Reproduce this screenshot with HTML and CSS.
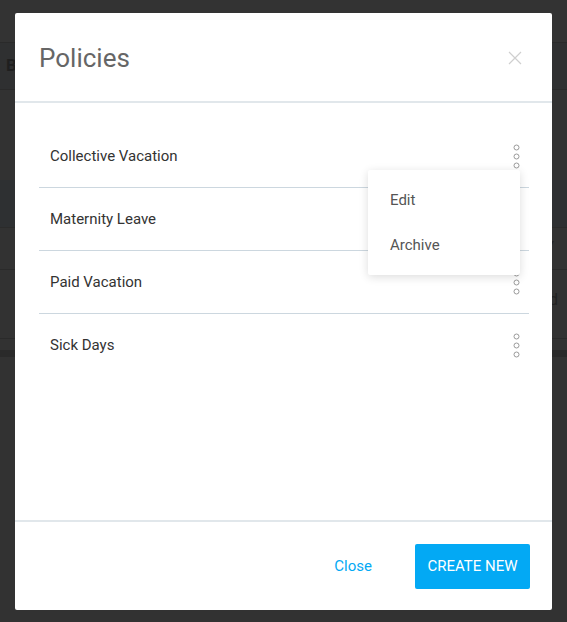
FILE: index.html
```html
<!DOCTYPE html>
<html>
<head>
<meta charset="utf-8">
<link rel="stylesheet" href="styles.css">
</head>
<body>
<div class="page">
  <div class="band band-top"></div>
  <div class="band band-head"><span class="bg-b">B</span></div>
  <div class="band band-gap"></div>
  <div class="band band-th"></div>
  <div class="band band-r1"><span class="bg-right">Y</span></div>
  <div class="band band-r2"><span class="bg-right">id</span></div>
  <div class="band band-r3"></div>
  <div class="band band-dark"></div>
</div>

<div class="modal">
  <div class="modal-header">
    <h1 class="modal-title">Policies</h1>
    <svg class="close-x" width="14" height="14" viewBox="0 0 14 14"><path d="M1 1L13 13M13 1L1 13" stroke="#cfcfcf" stroke-width="1.2" fill="none"/></svg>
  </div>
  <div class="modal-body">
    <ul class="policy-list">
      <li class="policy-row">
        <span class="policy-name">Collective Vacation</span>
        <svg class="kebab" width="7" height="25" viewBox="0 0 7 25"><circle cx="3.5" cy="3.5" r="2.5"/><circle cx="3.5" cy="12.5" r="2.5"/><circle cx="3.5" cy="21.5" r="2.5"/></svg>
        <div class="menu">
          <div class="menu-item">Edit</div>
          <div class="menu-item">Archive</div>
        </div>
      </li>
      <li class="policy-row">
        <span class="policy-name">Maternity Leave</span>
        <svg class="kebab" width="7" height="25" viewBox="0 0 7 25"><circle cx="3.5" cy="3.5" r="2.5"/><circle cx="3.5" cy="12.5" r="2.5"/><circle cx="3.5" cy="21.5" r="2.5"/></svg>
      </li>
      <li class="policy-row">
        <span class="policy-name">Paid Vacation</span>
        <svg class="kebab" width="7" height="25" viewBox="0 0 7 25"><circle cx="3.5" cy="3.5" r="2.5"/><circle cx="3.5" cy="12.5" r="2.5"/><circle cx="3.5" cy="21.5" r="2.5"/></svg>
      </li>
      <li class="policy-row">
        <span class="policy-name">Sick Days</span>
        <svg class="kebab" width="7" height="25" viewBox="0 0 7 25"><circle cx="3.5" cy="3.5" r="2.5"/><circle cx="3.5" cy="12.5" r="2.5"/><circle cx="3.5" cy="21.5" r="2.5"/></svg>
      </li>
    </ul>
  </div>
  <div class="modal-footer">
    <button class="btn-link">Close</button>
    <button class="btn-primary">CREATE NEW</button>
  </div>
</div>
</body>
</html>
```

FILE: styles.css
```css
html, body {
  margin: 0;
  padding: 0;
}
body {
  background: #323232;
  font-family: Roboto, "Liberation Sans", sans-serif;
  width: 567px;
  height: 622px;
  overflow: hidden;
  position: relative;
}
.page {
  display: flex;
  flex-direction: column;
}
.band {
  position: relative;
  box-sizing: border-box;
}
.band-top { height: 43px; background: #333333; border-bottom: 1px solid #2a2a2a; }
.band-head { height: 47px; background: #2f3031; border-bottom: 1px solid #2a2a2a; }
.band-gap { height: 90px; background: #323232; }
.band-th { height: 48px; background: #2e3032; border-bottom: 1px solid #2b2b2b; }
.band-r1 { height: 42px; background: #323232; border-bottom: 1px solid #2a2a2a; }
.band-r2 { height: 69px; background: #323232; border-bottom: 1px solid #2a2a2a; }
.band-r3 { height: 11px; background: #323232; }
.band-dark { height: 7px; background: #2a2a2a; }
.bg-b {
  position: absolute;
  left: 6px;
  top: 12px;
  font-size: 17px;
  font-weight: 700;
  color: #1f1f1f;
}
.bg-right {
  position: absolute;
  left: 545px;
  top: 10px;
  font-size: 15px;
  color: #222;
}
.band-r2 .bg-right { top: 20px; font-size: 16px; }

.modal {
  position: absolute;
  left: 15px;
  top: 13px;
  width: 537px;
  height: 597px;
  background: #fff;
  border-radius: 2px;
  display: flex;
  flex-direction: column;
}
.modal-header {
  height: 88px;
  padding: 0 30px 0 24px;
  display: flex;
  align-items: center;
  justify-content: space-between;
  border-bottom: 2px solid #e1e7eb;
}
.modal-title {
  margin: 0;
  font-size: 26px;
  font-weight: 400;
  color: #666;
  padding-top: 1px;
}
.close-x { display: block; margin-top: 1px; }

.modal-body {
  flex: 1;
  padding: 22px 23px 0 24px;
}
.policy-list {
  list-style: none;
  margin: 0;
  padding: 0;
}
.policy-row {
  position: relative;
  height: 63px;
  box-sizing: border-box;
  border-bottom: 1px solid #ccd7df;
  display: flex;
  align-items: center;
  justify-content: space-between;
  padding: 0 9px 0 11px;
}
.policy-row:last-child { border-bottom: none; height: 62px; }
.policy-name {
  font-size: 15px;
  color: #333;
}
.kebab { display: block; }
.kebab circle {
  fill: none;
  stroke: #9a9a9a;
  stroke-width: 1;
}
.menu {
  position: absolute;
  top: 45px;
  right: 9px;
  width: 152px;
  background: #fff;
  box-shadow: 0 2px 10px rgba(0,0,0,0.14);
  padding: 7px 0 8px;
  z-index: 2;
  border-radius: 2px;
}
.menu-item {
  height: 45px;
  display: flex;
  align-items: center;
  padding-left: 22px;
  font-size: 15px;
  color: #555;
}

.modal-footer {
  height: 88px;
  border-top: 2px solid #e1e7eb;
  display: flex;
  align-items: center;
  justify-content: flex-end;
  padding-right: 22px;
  gap: 43px;
}
.btn-link {
  border: none;
  background: none;
  padding: 0;
  font-family: inherit;
  font-size: 15px;
  color: #03a9f4;
}
.btn-primary {
  border: none;
  background: #03a9f4;
  color: #fff;
  font-family: inherit;
  font-size: 15px;
  width: 115px;
  height: 45px;
  border-radius: 2px;
  padding: 0;
}
```
